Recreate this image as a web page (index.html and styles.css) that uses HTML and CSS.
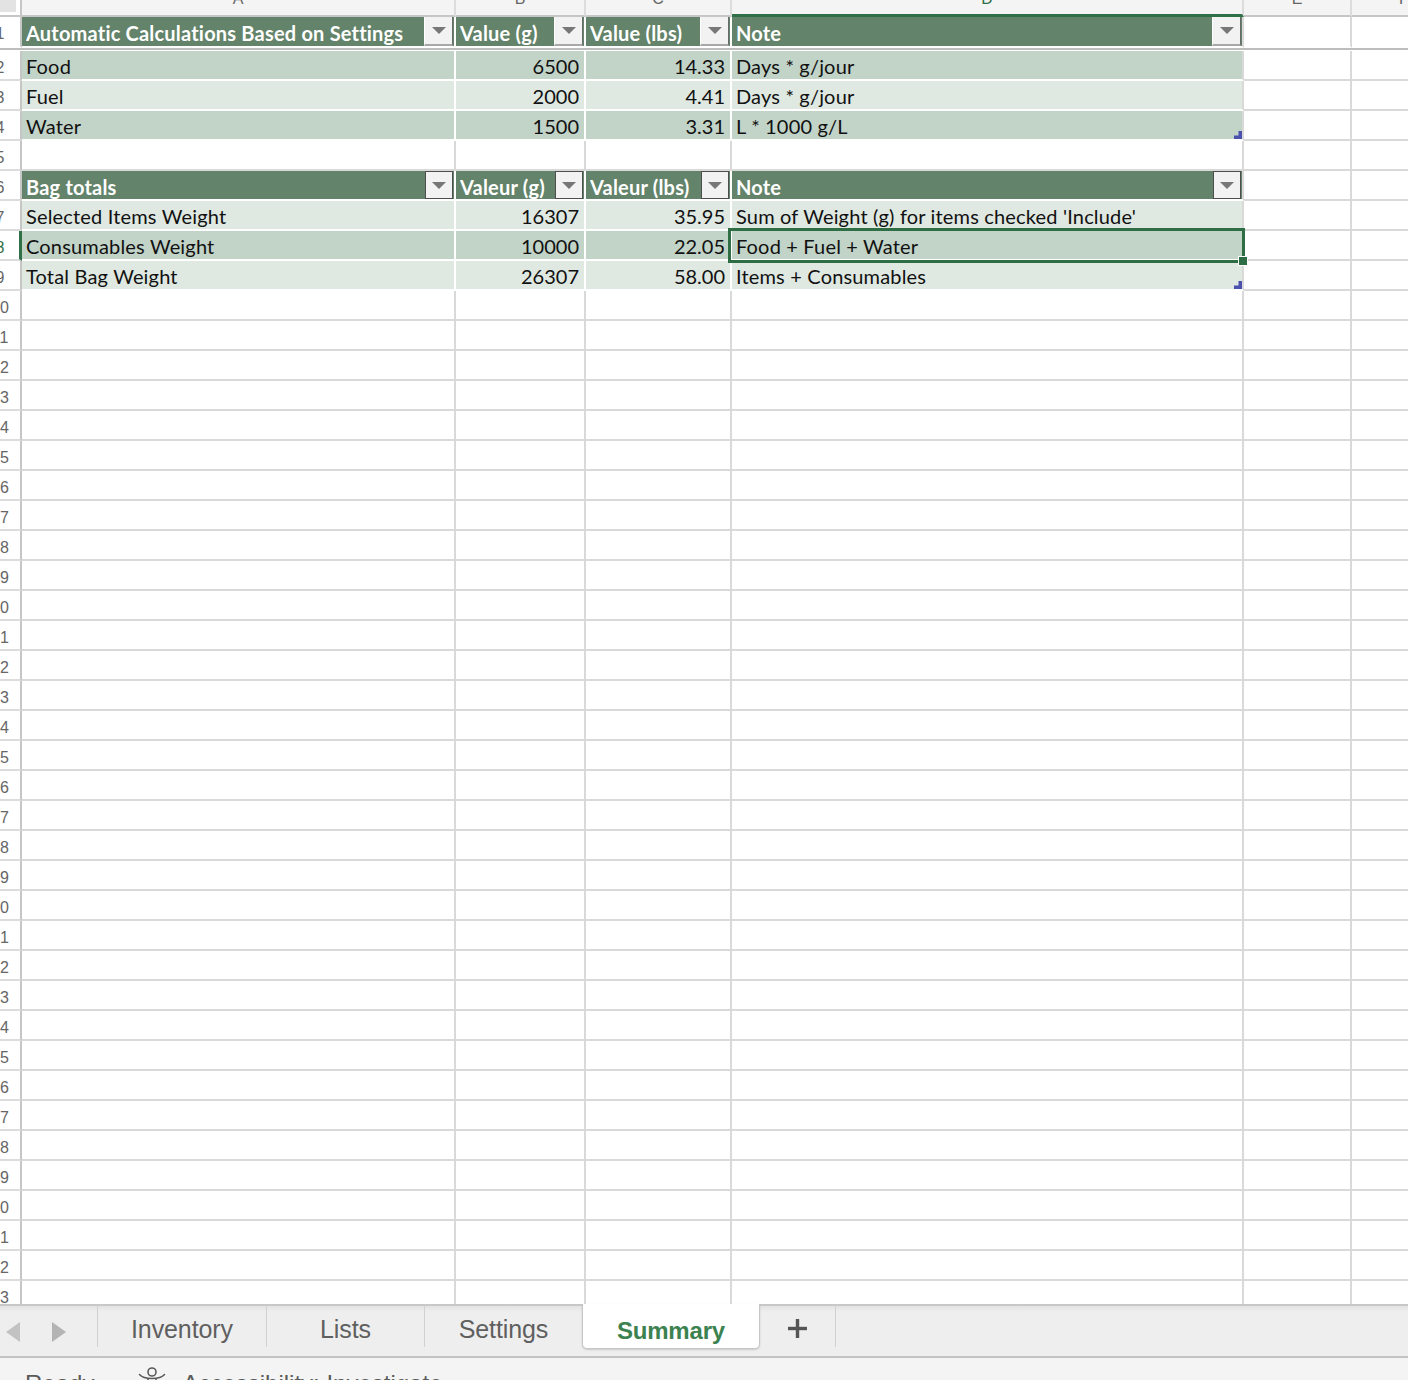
FILE: index.html
```html
<!DOCTYPE html>
<html>
<head>
<meta charset="utf-8">
<link rel="stylesheet" href="styles.css">
</head>
<body>
<div class="sheet">
  <div class="colhead">
    <div class="ch corner"><div class="corner-box"></div></div>
    <div class="ch ca"><span>A</span></div>
    <div class="ch cb"><span>B</span></div>
    <div class="ch cc"><span>C</span></div>
    <div class="ch cd active"><span>D</span></div>
    <div class="ch ce"><span>E</span></div>
    <div class="ch cf"><span>F</span></div>
  </div>

  <div class="row r1 tr">
    <div class="rh"><span>1</span></div>
    <div class="c ca hd"><span class="t">Automatic Calculations Based on Settings</span><span class="btn b1"><svg width="14" height="7" viewBox="0 0 14 7"><polygon points="0,0 14,0 7,7" fill="#777"/></svg></span></div>
    <div class="c cb hd"><span class="t">Value (g)</span><span class="btn b1"><svg width="14" height="7" viewBox="0 0 14 7"><polygon points="0,0 14,0 7,7" fill="#777"/></svg></span></div>
    <div class="c cc hd"><span class="t">Value (lbs)</span><span class="btn b1"><svg width="14" height="7" viewBox="0 0 14 7"><polygon points="0,0 14,0 7,7" fill="#777"/></svg></span></div>
    <div class="c cd hd"><span class="t">Note</span><span class="btn b1"><svg width="14" height="7" viewBox="0 0 14 7"><polygon points="0,0 14,0 7,7" fill="#777"/></svg></span></div>
    <div class="c ce"></div>
    <div class="c cf"></div>
  </div>
  <div class="freeze"></div>

  <div class="row tr">
    <div class="rh"><span>2</span></div>
    <div class="c ca dark">Food</div>
    <div class="c cb dark num">6500</div>
    <div class="c cc dark num">14.33</div>
    <div class="c cd dark">Days * g/jour</div>
    <div class="c ce"></div><div class="c cf"></div>
  </div>
  <div class="row tr">
    <div class="rh"><span>3</span></div>
    <div class="c ca light">Fuel</div>
    <div class="c cb light num">2000</div>
    <div class="c cc light num">4.41</div>
    <div class="c cd light">Days * g/jour</div>
    <div class="c ce"></div><div class="c cf"></div>
  </div>
  <div class="row tr">
    <div class="rh"><span>4</span></div>
    <div class="c ca dark">Water</div>
    <div class="c cb dark num">1500</div>
    <div class="c cc dark num">3.31</div>
    <div class="c cd dark anchor">L * 1000 g/L<svg class="rs" width="8" height="8" viewBox="0 0 8 8"><path d="M4.5 0H8V8H0V4.5H4.5Z" fill="#4a52ad"/></svg></div>
    <div class="c ce"></div><div class="c cf"></div>
  </div>
  <div class="row">
    <div class="rh"><span>5</span></div>
    <div class="c ca"></div><div class="c cb"></div><div class="c cc"></div><div class="c cd"></div><div class="c ce"></div><div class="c cf"></div>
  </div>
  <div class="row tr">
    <div class="rh"><span>6</span></div>
    <div class="c ca hd"><span class="t">Bag totals</span><span class="btn b2"><svg width="14" height="7" viewBox="0 0 14 7"><polygon points="0,0 14,0 7,7" fill="#777"/></svg></span></div>
    <div class="c cb hd"><span class="t">Valeur (g)</span><span class="btn b2"><svg width="14" height="7" viewBox="0 0 14 7"><polygon points="0,0 14,0 7,7" fill="#777"/></svg></span></div>
    <div class="c cc hd"><span class="t">Valeur (lbs)</span><span class="btn b2"><svg width="14" height="7" viewBox="0 0 14 7"><polygon points="0,0 14,0 7,7" fill="#777"/></svg></span></div>
    <div class="c cd hd"><span class="t">Note</span><span class="btn b2"><svg width="14" height="7" viewBox="0 0 14 7"><polygon points="0,0 14,0 7,7" fill="#777"/></svg></span></div>
    <div class="c ce"></div><div class="c cf"></div>
  </div>
  <div class="row tr">
    <div class="rh"><span>7</span></div>
    <div class="c ca light">Selected Items Weight</div>
    <div class="c cb light num">16307</div>
    <div class="c cc light num">35.95</div>
    <div class="c cd light">Sum of Weight (g) for items checked 'Include'</div>
    <div class="c ce"></div><div class="c cf"></div>
  </div>
  <div class="row tr">
    <div class="rh rh-sel"><span>8</span></div>
    <div class="c ca dark">Consumables Weight</div>
    <div class="c cb dark num">10000</div>
    <div class="c cc dark num">22.05</div>
    <div class="c cd dark anchor">Food + Fuel + Water<div class="sel"></div><div class="handle"></div></div>
    <div class="c ce"></div><div class="c cf"></div>
  </div>
  <div class="row tr">
    <div class="rh"><span>9</span></div>
    <div class="c ca light">Total Bag Weight</div>
    <div class="c cb light num">26307</div>
    <div class="c cc light num">58.00</div>
    <div class="c cd light anchor">Items + Consumables<svg class="rs" width="8" height="8" viewBox="0 0 8 8"><path d="M4.5 0H8V8H0V4.5H4.5Z" fill="#4a52ad"/></svg></div>
    <div class="c ce"></div><div class="c cf"></div>
  </div>

  <div class="row"><div class="rh"><span>10</span></div><div class="c ca"></div><div class="c cb"></div><div class="c cc"></div><div class="c cd"></div><div class="c ce"></div><div class="c cf"></div></div>
  <div class="row"><div class="rh"><span>11</span></div><div class="c ca"></div><div class="c cb"></div><div class="c cc"></div><div class="c cd"></div><div class="c ce"></div><div class="c cf"></div></div>
  <div class="row"><div class="rh"><span>12</span></div><div class="c ca"></div><div class="c cb"></div><div class="c cc"></div><div class="c cd"></div><div class="c ce"></div><div class="c cf"></div></div>
  <div class="row"><div class="rh"><span>13</span></div><div class="c ca"></div><div class="c cb"></div><div class="c cc"></div><div class="c cd"></div><div class="c ce"></div><div class="c cf"></div></div>
  <div class="row"><div class="rh"><span>14</span></div><div class="c ca"></div><div class="c cb"></div><div class="c cc"></div><div class="c cd"></div><div class="c ce"></div><div class="c cf"></div></div>
  <div class="row"><div class="rh"><span>15</span></div><div class="c ca"></div><div class="c cb"></div><div class="c cc"></div><div class="c cd"></div><div class="c ce"></div><div class="c cf"></div></div>
  <div class="row"><div class="rh"><span>16</span></div><div class="c ca"></div><div class="c cb"></div><div class="c cc"></div><div class="c cd"></div><div class="c ce"></div><div class="c cf"></div></div>
  <div class="row"><div class="rh"><span>17</span></div><div class="c ca"></div><div class="c cb"></div><div class="c cc"></div><div class="c cd"></div><div class="c ce"></div><div class="c cf"></div></div>
  <div class="row"><div class="rh"><span>18</span></div><div class="c ca"></div><div class="c cb"></div><div class="c cc"></div><div class="c cd"></div><div class="c ce"></div><div class="c cf"></div></div>
  <div class="row"><div class="rh"><span>19</span></div><div class="c ca"></div><div class="c cb"></div><div class="c cc"></div><div class="c cd"></div><div class="c ce"></div><div class="c cf"></div></div>
  <div class="row"><div class="rh"><span>20</span></div><div class="c ca"></div><div class="c cb"></div><div class="c cc"></div><div class="c cd"></div><div class="c ce"></div><div class="c cf"></div></div>
  <div class="row"><div class="rh"><span>21</span></div><div class="c ca"></div><div class="c cb"></div><div class="c cc"></div><div class="c cd"></div><div class="c ce"></div><div class="c cf"></div></div>
  <div class="row"><div class="rh"><span>22</span></div><div class="c ca"></div><div class="c cb"></div><div class="c cc"></div><div class="c cd"></div><div class="c ce"></div><div class="c cf"></div></div>
  <div class="row"><div class="rh"><span>23</span></div><div class="c ca"></div><div class="c cb"></div><div class="c cc"></div><div class="c cd"></div><div class="c ce"></div><div class="c cf"></div></div>
  <div class="row"><div class="rh"><span>24</span></div><div class="c ca"></div><div class="c cb"></div><div class="c cc"></div><div class="c cd"></div><div class="c ce"></div><div class="c cf"></div></div>
  <div class="row"><div class="rh"><span>25</span></div><div class="c ca"></div><div class="c cb"></div><div class="c cc"></div><div class="c cd"></div><div class="c ce"></div><div class="c cf"></div></div>
  <div class="row"><div class="rh"><span>26</span></div><div class="c ca"></div><div class="c cb"></div><div class="c cc"></div><div class="c cd"></div><div class="c ce"></div><div class="c cf"></div></div>
  <div class="row"><div class="rh"><span>27</span></div><div class="c ca"></div><div class="c cb"></div><div class="c cc"></div><div class="c cd"></div><div class="c ce"></div><div class="c cf"></div></div>
  <div class="row"><div class="rh"><span>28</span></div><div class="c ca"></div><div class="c cb"></div><div class="c cc"></div><div class="c cd"></div><div class="c ce"></div><div class="c cf"></div></div>
  <div class="row"><div class="rh"><span>29</span></div><div class="c ca"></div><div class="c cb"></div><div class="c cc"></div><div class="c cd"></div><div class="c ce"></div><div class="c cf"></div></div>
  <div class="row"><div class="rh"><span>30</span></div><div class="c ca"></div><div class="c cb"></div><div class="c cc"></div><div class="c cd"></div><div class="c ce"></div><div class="c cf"></div></div>
  <div class="row"><div class="rh"><span>31</span></div><div class="c ca"></div><div class="c cb"></div><div class="c cc"></div><div class="c cd"></div><div class="c ce"></div><div class="c cf"></div></div>
  <div class="row"><div class="rh"><span>32</span></div><div class="c ca"></div><div class="c cb"></div><div class="c cc"></div><div class="c cd"></div><div class="c ce"></div><div class="c cf"></div></div>
  <div class="row"><div class="rh"><span>33</span></div><div class="c ca"></div><div class="c cb"></div><div class="c cc"></div><div class="c cd"></div><div class="c ce"></div><div class="c cf"></div></div>
  <div class="row"><div class="rh"><span>34</span></div><div class="c ca"></div><div class="c cb"></div><div class="c cc"></div><div class="c cd"></div><div class="c ce"></div><div class="c cf"></div></div>
  <div class="row"><div class="rh"><span>35</span></div><div class="c ca"></div><div class="c cb"></div><div class="c cc"></div><div class="c cd"></div><div class="c ce"></div><div class="c cf"></div></div>
  <div class="row"><div class="rh"><span>36</span></div><div class="c ca"></div><div class="c cb"></div><div class="c cc"></div><div class="c cd"></div><div class="c ce"></div><div class="c cf"></div></div>
  <div class="row"><div class="rh"><span>37</span></div><div class="c ca"></div><div class="c cb"></div><div class="c cc"></div><div class="c cd"></div><div class="c ce"></div><div class="c cf"></div></div>
  <div class="row"><div class="rh"><span>38</span></div><div class="c ca"></div><div class="c cb"></div><div class="c cc"></div><div class="c cd"></div><div class="c ce"></div><div class="c cf"></div></div>
  <div class="row"><div class="rh"><span>39</span></div><div class="c ca"></div><div class="c cb"></div><div class="c cc"></div><div class="c cd"></div><div class="c ce"></div><div class="c cf"></div></div>
  <div class="row"><div class="rh"><span>40</span></div><div class="c ca"></div><div class="c cb"></div><div class="c cc"></div><div class="c cd"></div><div class="c ce"></div><div class="c cf"></div></div>
  <div class="row"><div class="rh"><span>41</span></div><div class="c ca"></div><div class="c cb"></div><div class="c cc"></div><div class="c cd"></div><div class="c ce"></div><div class="c cf"></div></div>
  <div class="row"><div class="rh"><span>42</span></div><div class="c ca"></div><div class="c cb"></div><div class="c cc"></div><div class="c cd"></div><div class="c ce"></div><div class="c cf"></div></div>
  <div class="row"><div class="rh"><span>43</span></div><div class="c ca"></div><div class="c cb"></div><div class="c cc"></div><div class="c cd"></div><div class="c ce"></div><div class="c cf"></div></div>
</div>

<div class="tabbar">
  <div class="nav">
    <svg class="arrow left" width="14" height="20" viewBox="0 0 14 20"><polygon points="14,0 14,20 0,10" fill="#c2c2c2"/></svg>
    <svg class="arrow right" width="14" height="20" viewBox="0 0 14 20"><polygon points="0,0 0,20 14,10" fill="#b4b4b4"/></svg>
  </div>
  <div class="tab">Inventory</div>
  <div class="tab">Lists</div>
  <div class="tab">Settings</div>
  <div class="tab current">Summary</div>
  <div class="tab plus"><svg width="19" height="19" viewBox="0 0 19 19"><rect x="7.8" y="0" width="3.4" height="19" fill="#555"/><rect x="0" y="7.8" width="19" height="3.4" fill="#555"/></svg></div>
</div>

<div class="status">
  <span class="ready">Ready</span>
  <svg class="a11y" width="28" height="24" viewBox="0 0 28 24"><circle cx="14" cy="5" r="4" fill="none" stroke="#5a5a5a" stroke-width="1.6"/><path d="M1.5 7.5C4 10.5 9 11.5 14 11.5S24 10.5 26.5 7.5" fill="none" stroke="#5a5a5a" stroke-width="1.6" stroke-linecap="round"/><path d="M10 11.5V22M18 11.5V22" fill="none" stroke="#5a5a5a" stroke-width="1.6"/></svg>
  <span class="a11y-text">Accessibility: Investigate</span>
</div>
</body>
</html>
```

FILE: styles.css
```css
* { box-sizing: border-box; }
html, body { margin: 0; padding: 0; }
body {
  width: 1408px;
  height: 1380px;
  overflow: hidden;
  background: #fff;
  font-family: Lato, "Open Sans", sans-serif;
}

.sheet { height: 1304px; overflow: hidden; }

/* column header */
.colhead { display: flex; height: 17px; }
.ch {
  flex-shrink: 0;
  height: 17px;
  background: #f4f4f4;
  border-right: 2px solid #dcdcdc;
  border-bottom: 2px solid #c6c6c6;
  overflow: hidden;
  text-align: center;
  font: 16px/16px "Liberation Sans", Arial, sans-serif;
  color: #666;
}
.ch span { display: block; margin-top: -9px; }
.ch.active { border-bottom: 3px solid #2f7046; color: #2f7046; }
.corner { width: 22px; background: #fff; border-right: 2px solid #c6c6c6; }
.corner-box { width: 16px; height: 12px; background: #e3e3e3; }

/* columns */
.ca { width: 434px; }
.cb { width: 130px; }
.cc { width: 146px; }
.cd { width: 512px; }
.ce { width: 108px; }
.cf { width: 106px; }

/* rows */
.row { display: flex; height: 30px; }
.rh {
  flex-shrink: 0;
  width: 22px;
  height: 100%;
  border-right: 2px solid #c6c6c6;
  border-bottom: 2px solid #dcdcdc;
  overflow: hidden;
}
.rh span {
  display: block;
  width: 40px;
  margin-left: -20px;
  padding-top: 3px;
  text-align: center;
  font: 16px/28px "Liberation Sans", Arial, sans-serif;
  color: #666;
}
.rh-sel { border-right: 3px solid #2f7046; }
.rh-sel span { color: #2f7046; }

.c {
  flex-shrink: 0;
  height: 100%;
  border-right: 2px solid #d9d9d9;
  border-bottom: 2px solid #d9d9d9;
  padding: 1px 4px 0;
  font-size: 20px;
  line-height: 28px;
  letter-spacing: 0.17px;
  color: #111;
  white-space: nowrap;
  overflow: hidden;
}
.num { text-align: right; padding-right: 5px; letter-spacing: 0; }

/* table rows */
.tr .ca, .tr .cb, .tr .cc { border-right-color: #fff; border-bottom-color: #fff; }
.tr .cd { border-bottom-color: #fff; }
.dark { background: #c2d3c8; }
.light { background: #dfe8e1; }
.hd {
  background: #63836a;
  color: #fff;
  font-weight: 700;
  letter-spacing: 0.2px;
  display: flex;
  padding-top: 0;
  padding-right: 1px;
}
.hd .t { flex: 1; overflow: hidden; padding-top: 2px; }
.btn {
  flex-shrink: 0;
  width: 29px;
  height: 100%;
  background: #f2f2f2;
  display: flex;
  align-items: center;
  justify-content: center;
}
.b1 {
  border-left: 1px solid #fff;
  border-right: 1px solid #6a6a6a;
  border-bottom: 2px solid #a8a8a8;
}
.b2 { width: 28px; border: 1px solid #4e4e4e; }

/* first row + freeze line */
.r1 { height: 31px; }
.r1 .c { line-height: 29px; border-bottom-color: #fff; }
.r1 .rh { border-bottom-color: #fff; }
.freeze { height: 2px; background: #bdbdbd; margin-bottom: 1px; }

/* selection + table handles */
.anchor { position: relative; overflow: visible; }
.sel {
  position: absolute;
  z-index: 2;
  left: -4px; top: -3px; right: -3px; bottom: -4px;
  border: 3px solid #2f6e44;
}
.handle {
  position: absolute;
  z-index: 3;
  right: -6px; bottom: -7px;
  width: 10px; height: 10px;
  background: #2f6e44;
  border: 1px solid #fff;
}
.rs { position: absolute; right: 0; bottom: 0; }

/* sheet tabs */
.tabbar {
  height: 54px;
  border-top: 2px solid #c8c8c8;
  border-bottom: 2px solid #c2c2c2;
  background: linear-gradient(#e3e3e3, #eeeeee 6px);
  display: flex;
  align-items: flex-start;
  font-family: "Liberation Sans", Arial, sans-serif;
}
.nav { width: 97px; height: 41px; display: flex; align-items: flex-start; flex-shrink: 0; }
.arrow { margin-top: 16px; }
.arrow.left { margin-left: 6px; }
.arrow.right { margin-left: 32px; }
.tab {
  flex-shrink: 0;
  height: 41px;
  min-width: 158px;
  padding: 5px 33px 0;
  line-height: 36px;
  text-align: center;
  font-size: 25px;
  letter-spacing: -0.1px;
  color: #5f5f5f;
  border-left: 1px solid #d0d0d0;
}
.tab.current {
  margin-top: -2px;
  height: 45px;
  min-width: 0;
  padding: 9px 34px 0;
  background: #fff;
  color: #3b8250;
  font-weight: 700;
  font-size: 24px;
  letter-spacing: -0.2px;
  border: 1px solid #c6c6c6;
  border-top: none;
  border-radius: 0 0 5px 5px;
  box-shadow: 0 1px 2px rgba(0,0,0,0.15);
}
.tab.plus {
  min-width: 0;
  width: 76px;
  padding: 4px 0 0;
  border-left: none;
  border-right: 1px solid #d0d0d0;
  display: flex;
  align-items: center;
  justify-content: center;
}

/* status bar */
.status {
  height: 22px;
  background: #f4f4f4;
  display: flex;
  align-items: flex-start;
  overflow: hidden;
  font: 24px/24px "Liberation Sans", Arial, sans-serif;
  color: #5a5a5a;
}
.ready { margin-left: 25px; padding-top: 14px; }
.a11y { margin-left: 44px; margin-top: 9px; flex-shrink: 0; }
.a11y-text { margin-left: 16px; padding-top: 14px; }
```
